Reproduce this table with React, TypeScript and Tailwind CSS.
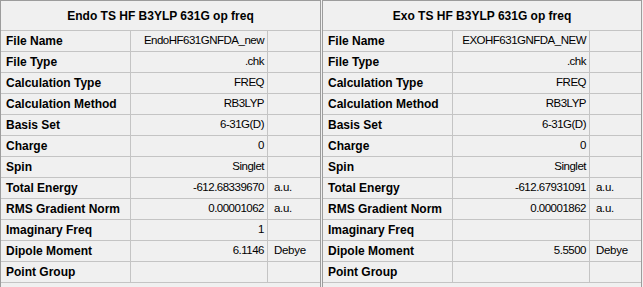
import React from 'react';

type Row = { label: string; value: string; unit?: string };

const endoRows: Row[] = [
  { label: 'File Name', value: 'EndoHF631GNFDA_new' },
  { label: 'File Type', value: '.chk' },
  { label: 'Calculation Type', value: 'FREQ' },
  { label: 'Calculation Method', value: 'RB3LYP' },
  { label: 'Basis Set', value: '6-31G(D)' },
  { label: 'Charge', value: '0' },
  { label: 'Spin', value: 'Singlet' },
  { label: 'Total Energy', value: '-612.68339670', unit: 'a.u.' },
  { label: 'RMS Gradient Norm', value: '0.00001062', unit: 'a.u.' },
  { label: 'Imaginary Freq', value: '1' },
  { label: 'Dipole Moment', value: '6.1146', unit: 'Debye' },
  { label: 'Point Group', value: '' },
];

const exoRows: Row[] = [
  { label: 'File Name', value: 'EXOHF631GNFDA_NEW' },
  { label: 'File Type', value: '.chk' },
  { label: 'Calculation Type', value: 'FREQ' },
  { label: 'Calculation Method', value: 'RB3LYP' },
  { label: 'Basis Set', value: '6-31G(D)' },
  { label: 'Charge', value: '0' },
  { label: 'Spin', value: 'Singlet' },
  { label: 'Total Energy', value: '-612.67931091', unit: 'a.u.' },
  { label: 'RMS Gradient Norm', value: '0.00001862', unit: 'a.u.' },
  { label: 'Imaginary Freq', value: '' },
  { label: 'Dipole Moment', value: '5.5500', unit: 'Debye' },
  { label: 'Point Group', value: '' },
];

const SummaryPanel = ({ title, rows, width }: { title: string; rows: Row[]; width: string }) => {
  return (
    <div className={`${width} h-full flex flex-col border-l border-t border-r border-[#9c9c9c] bg-[#f0f0f0]`}>
      {/* title */}
      <div className="h-[30px] flex items-center justify-center border-b border-[#c4c4c4] font-bold text-[12px]">
        {title}
      </div>
      {rows.map((r) => (
        <div key={r.label} className="h-[21px] grid grid-cols-[130px_137px_1fr] border-b border-[#c4c4c4]">
          <div className="flex items-center pl-[5px] font-bold text-[12px] border-r border-[#c4c4c4]">{r.label}</div>
          <div className="flex items-center justify-end pr-[3px] text-[11.5px] tracking-[-0.5px] border-r border-[#c4c4c4]">
            {r.value}
          </div>
          <div className="flex items-center pl-[6px] text-[11.5px] tracking-[-0.3px]">{r.unit}</div>
        </div>
      ))}
    </div>
  );
};

export default function App() {
  return (
    <div className="w-[643px] h-[287px] overflow-hidden bg-[#f0f0f0] flex gap-[1px] text-black font-['Liberation_Sans',Arial,sans-serif]">
      <SummaryPanel title="Endo TS HF B3YLP 631G op freq" rows={endoRows} width="w-[321px]" />
      <SummaryPanel title="Exo TS HF B3YLP 631G op freq" rows={exoRows} width="w-[320px]" />
    </div>
  );
}
